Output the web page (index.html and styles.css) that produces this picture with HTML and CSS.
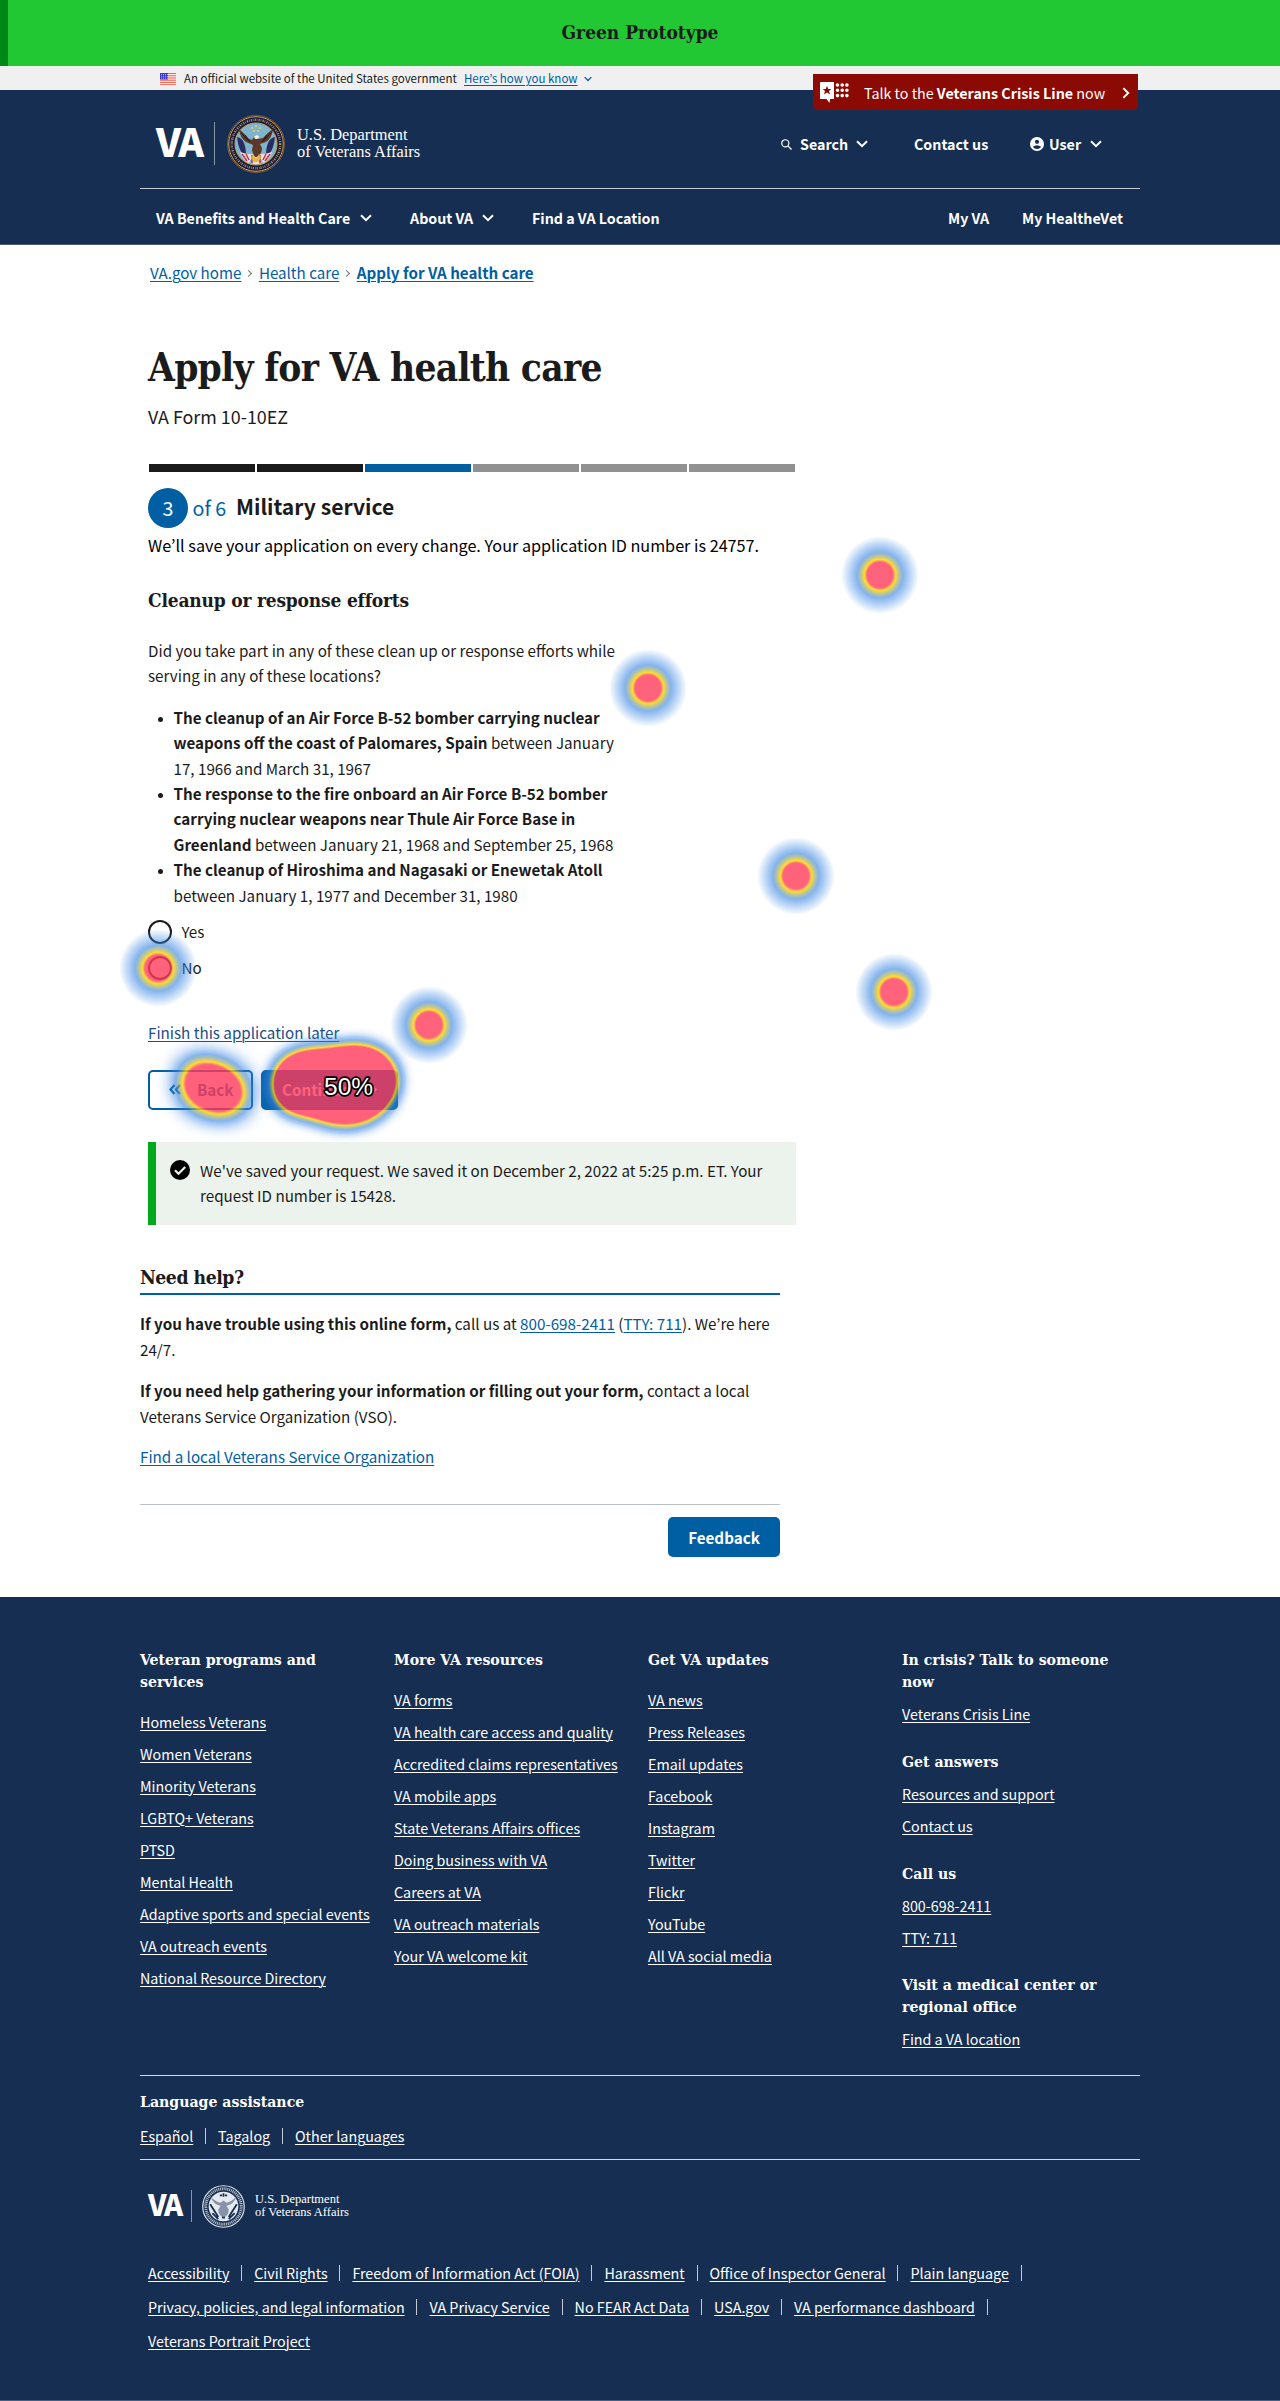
FILE: index.html
```html
<!DOCTYPE html>
<html lang="en">
<head>
<meta charset="utf-8">
<title>Apply for VA health care</title>
<link rel="stylesheet" href="styles.css">
</head>
<body>
<svg class="defs" width="0" height="0" aria-hidden="true">
  <symbol id="chev" viewBox="0 0 12 8"><path d="M1 1.2l5 5 5-5" fill="none" stroke="currentColor" stroke-width="2"/></symbol>
  <symbol id="double" viewBox="0 0 12 11"><path d="M5.500 1L1.500 5.500l4 4.500M11 1L7 5.500l4 4.500" fill="none" stroke="currentColor" stroke-width="2.200"/></symbol>
  <symbol id="seal" viewBox="0 0 58 58">
    <circle cx="29" cy="29" r="28.5" fill="#1d1b3d" stroke="#7d5a3c"/>
    <circle cx="29" cy="29" r="27.3" fill="none" stroke="#c7a34c" stroke-width="1"/>
    <circle cx="29" cy="29" r="24.200" fill="none" stroke="#a8976c" stroke-width="2.4" stroke-dasharray="1.1 1 .6 1.3"/>
    <circle cx="29" cy="29" r="21" fill="#7fb4cf" stroke="#c7a34c" stroke-width="1"/>
    <path d="M10 22q8 1 9 16l5 8q-12-5-14-24zM48 22q-8 1-9 16l-5 8q12-5 14-24z" fill="#2b2c63"/>
    <path d="M13 37q9 3 16 2 7 1 16-2-3 9-9 11l-3-5-1 6h-6l-1-6-3 5q-6-2-9-11z" fill="#e9dedd"/>
    <path d="M15 39l5 7m-1-7l3 6m3-5v8m8-8v8m6-9l-3 6m7-6l-5 7" stroke="#b83345" stroke-width="1.4"/>
    <path d="M12 14q1 9 7 13l7 3-1 5q1 5 3 7h2q5-3 5-9l-2-4 6-2q6-4 7-13-6 4-10 9l-5 1q-1-3-4-2l-2 3q-3-1-4-2-4-5-9-9z" fill="#5b3827"/>
    <path d="M14 18l8 8m-4-6l5 7m21-9l-8 8m4-6l-5 7" stroke="#2e1b17" stroke-width="1"/>
    <path d="M27 21.500l3-1.500 2.500 2-2.500 2h-2z" fill="#f4f0e6"/>
    <path d="M24 43l2-4 3 5 3-5 2 4-3 4h-4z" fill="#e2b43f"/>
    <g fill="#e9d65c"><circle cx="29" cy="11" r="1"/><circle cx="25" cy="13" r="1"/><circle cx="33" cy="13" r="1"/><circle cx="27" cy="16" r="1"/><circle cx="31" cy="16" r="1"/></g>
  </symbol>
  <symbol id="seal-mono" viewBox="0 0 58 58">
    <circle cx="29" cy="29" r="28" fill="none" stroke="#dfe3ea" stroke-width="1.600"/>
    <circle cx="29" cy="29" r="24" fill="none" stroke="#aeb8c6" stroke-width="4" stroke-dasharray="1.500 1"/>
    <circle cx="29" cy="29" r="20" fill="#e6eaf0"/>
    <path d="M12 16q3 11 13 12l-3 5q0 7 5 10h4q5-3 5-10l-3-5q10-1 13-12-6 7-13 8l-4-3-4 3q-7-1-13-8z" fill="#8793a8"/>
    <path d="M11 26l11 17m25-17L36 43M14 38l8 8m22-8l-8 8M29 11v5m-5-2h3m4 0h3M27 44h4" stroke="#162e51" stroke-width="2.500"/>
  </symbol>
</svg>

<div class="banner">Green Prototype</div>
<div class="gov">
  <svg class="flag" viewBox="0 0 16 12"><path fill="#fff" d="M0 0h16v12H0z"/><path d="M0 .5h16M0 2.300h16M0 4.100h16M0 5.900h16M0 7.700h16M0 9.500h16M0 11.400h16" stroke="#f4695a" stroke-width="1"/><path fill="#3838c8" d="M0 0h8v6.500H0z"/><path d="M1 1.500h7M1 3.300h7M1 5.100h7" stroke="#b9b9f5" stroke-dasharray="1 1"/></svg>
  <span class="gov-text">An official website of the United States government</span>
  <a class="gov-link">Here’s how you know</a>
  <svg class="gov-chev"><use href="#chev"/></svg>
</div>

<header class="header">
  <a class="crisis">
    <svg class="crisis-icon" viewBox="0 0 29 21"><path fill="#fff" d="M1 0h13v17h-4l-.5 4-3-4H0V1q0-1 1-1z"/><path fill="#8b0a03" d="M7 4l1.300 3h3L9 9l1 3.500-3-2-3 2L5 9 2.700 7h3z"/><g stroke="#fff" stroke-width="3.600" stroke-linecap="round" stroke-dasharray="0 4.700"><path d="M17.500 3h11M17.500 8.300h11M17.500 13.600h11"/></g></svg>
    <span class="crisis-text">Talk to the <b>Veterans Crisis Line</b> now</span>
    <svg class="crisis-arrow" viewBox="0 0 9 14"><path d="M1.500 1.500L7 7l-5.500 5.500" fill="none" stroke="#fff" stroke-width="2.200"/></svg>
  </a>
  <div class="wrap">
    <div class="brand-row">
      <div class="logo">
        <span class="logo-va">VA</span><i class="logo-bar"></i>
        <svg class="logo-seal"><use href="#seal"/></svg>
        <span class="logo-name">U.S. Department<br>of Veterans Affairs</span>
      </div>
      <div class="tools">
        <svg class="ic-search" viewBox="0 0 12 12"><circle cx="4.700" cy="4.700" r="3.900" fill="none" stroke="#fff" stroke-width="1.300"/><path d="M7.500 7.500l4 4" stroke="#fff" stroke-width="1.500"/></svg>
        <span class="t-search">Search</span><svg class="chev"><use href="#chev"/></svg>
        <span class="t-contact">Contact us</span>
        <svg class="ic-user" viewBox="0 0 14 14"><circle cx="7" cy="7" r="7" fill="#fff"/><circle cx="7" cy="4.800" r="2.100" fill="#162e51"/><path d="M2.800 9.700q4.200-3 8.400 0-1.600 2.300-4.200 2.300T2.800 9.700z" fill="#162e51"/></svg>
        <span class="t-user">User</span><svg class="chev"><use href="#chev"/></svg>
      </div>
    </div>
    <nav class="nav">
      <span>VA Benefits and Health Care</span><svg class="chev"><use href="#chev"/></svg>
      <span class="n-about">About VA</span><svg class="chev"><use href="#chev"/></svg>
      <span class="n-find">Find a VA Location</span>
      <span class="n-my">My VA</span><span class="n-mhv">My HealtheVet</span>
    </nav>
  </div>
</header>

<main class="wrap main">
  <div class="crumbs"><a>VA.gov home</a><i></i><a>Health care</a><i></i><a><b>Apply for VA health care</b></a></div>
  <div class="form">
    <h1>Apply for VA health care</h1>
    <p class="formno">VA Form 10-10EZ</p>
    <div class="progress"><i class="done"></i><i class="done"></i><i class="now"></i><i></i><i></i><i></i></div>
    <div class="step"><span class="num">3</span><span class="of">of 6</span><b>Military service</b></div>
    <p class="save">We’ll save your application on every change. Your application ID number is 24757.</p>
    <h3>Cleanup or response efforts</h3>
    <p class="question">Did you take part in any of these clean up or response efforts while<br>serving in any of these locations?</p>
    <ul class="events">
      <li><b>The cleanup of an Air Force B-52 bomber carrying nuclear<br>weapons off the coast of Palomares, Spain</b> between January<br>17, 1966 and March 31, 1967</li>
      <li><b>The response to the fire onboard an Air Force B-52 bomber<br>carrying nuclear weapons near Thule Air Force Base in<br>Greenland</b> between January 21, 1968 and September 25, 1968</li>
      <li><b>The cleanup of Hiroshima and Nagasaki or Enewetak Atoll</b><br>between January 1, 1977 and December 31, 1980</li>
    </ul>
    <div class="radios"><label><i></i>Yes</label><label><i></i>No</label></div>
    <p class="finish"><a>Finish this application later</a></p>
    <div class="buttons"><span class="btn back"><svg><use href="#double"/></svg>Back</span><span class="btn go">Continue<svg><use href="#double"/></svg></span></div>
    <div class="alert">
      <svg viewBox="0 0 20 20"><circle cx="10" cy="10" r="10"/><path d="M5 10.300l3.500 3.500L15.200 7" fill="none" stroke="#ecf3ec" stroke-width="2.200"/></svg>
      <p>We've saved your request. We saved it on December 2, 2022 at 5:25 p.m. ET. Your<br>request ID number is 15428.</p>
    </div>
  </div>
  <section class="help">
    <h2>Need help?</h2>
    <p><b>If you have trouble using this online form,</b> call us at <a>800-698-2411</a> (<a>TTY: 711</a>). We’re here<br>24/7.</p>
    <p><b>If you need help gathering your information or filling out your form,</b> contact a local<br>Veterans Service Organization (VSO).</p>
    <p class="vso"><a>Find a local Veterans Service Organization</a></p>
    <div class="feedback"><span>Feedback</span></div>
  </section>
</main>

<footer class="footer">
  <div class="wrap">
    <div class="cols">
      <div class="col">
        <h4>Veteran programs and<br>services</h4>
        <ul><li>Homeless Veterans</li><li>Women Veterans</li><li>Minority Veterans</li><li>LGBTQ+ Veterans</li><li>PTSD</li><li>Mental Health</li><li>Adaptive sports and special events</li><li>VA outreach events</li><li>National Resource Directory</li></ul>
      </div>
      <div class="col">
        <h4>More VA resources</h4>
        <ul><li>VA forms</li><li>VA health care access and quality</li><li>Accredited claims representatives</li><li>VA mobile apps</li><li>State Veterans Affairs offices</li><li>Doing business with VA</li><li>Careers at VA</li><li>VA outreach materials</li><li>Your VA welcome kit</li></ul>
      </div>
      <div class="col">
        <h4>Get VA updates</h4>
        <ul><li>VA news</li><li>Press Releases</li><li>Email updates</li><li>Facebook</li><li>Instagram</li><li>Twitter</li><li>Flickr</li><li>YouTube</li><li>All VA social media</li></ul>
      </div>
      <div class="col tight">
        <h4>In crisis? Talk to someone<br>now</h4>
        <ul><li>Veterans Crisis Line</li></ul>
        <h4>Get answers</h4>
        <ul><li>Resources and support</li><li>Contact us</li></ul>
        <h4>Call us</h4>
        <ul><li>800-698-2411</li><li>TTY: 711</li></ul>
        <h4>Visit a medical center or<br>regional office</h4>
        <ul><li>Find a VA location</li></ul>
      </div>
    </div>
    <div class="lang">
      <h4>Language assistance</h4>
      <div class="links"><a>Español</a><a>Tagalog</a><a>Other languages</a></div>
    </div>
    <div class="foot-logo">
      <span class="logo-va">VA</span><i class="logo-bar"></i>
      <svg class="logo-seal"><use href="#seal-mono"/></svg>
      <span class="logo-name">U.S. Department<br>of Veterans Affairs</span>
    </div>
    <div class="legal">
      <div class="links"><a>Accessibility</a><a>Civil Rights</a><a>Freedom of Information Act (FOIA)</a><a>Harassment</a><a>Office of Inspector General</a><a>Plain language</a><i></i></div>
      <div class="links"><a>Privacy, policies, and legal information</a><a>VA Privacy Service</a><a>No FEAR Act Data</a><a>USA.gov</a><a>VA performance dashboard</a><i></i></div>
      <div class="links"><a>Veterans Portrait Project</a></div>
    </div>
  </div>
</footer>

<svg class="heatmap" width="1280" height="1300" viewBox="0 0 1280 1300">
  <defs>
    <radialGradient id="spot">
      <stop offset=".33" stop-color="#ff3b5b" stop-opacity=".8"/>
      <stop offset=".4" stop-color="#ffd300" stop-opacity=".8"/>
      <stop offset=".59" stop-color="#3282e3" stop-opacity=".6"/>
      <stop offset=".8" stop-color="#3282e3" stop-opacity=".3"/>
      <stop offset="1" stop-color="#3282e3" stop-opacity="0"/>
    </radialGradient>
    <filter id="heat" x="-40%" y="-60%" width="180%" height="220%" color-interpolation-filters="sRGB">
      <feGaussianBlur stdDeviation="8"/>
      <feColorMatrix values="0 0 0 1 0  0 0 0 1 0  0 0 0 1 0  0 0 0 1 0"/>
      <feComponentTransfer>
        <feFuncR type="table" tableValues=".2 .2 .2 .6 1 1 1 1 1 1 1"/>
        <feFuncG type="table" tableValues=".51 .51 .51 .67 .83 .23 .23 .23 .23 .23 .23"/>
        <feFuncB type="table" tableValues=".89 .89 .89 .45 0 .36 .36 .36 .36 .36 .36"/>
        <feFuncA type="table" tableValues="0 .4 .6 .7 .8 .8 .8 .8 .8 .8 .8"/>
      </feComponentTransfer>
    </filter>
    <filter id="heat-soft" x="-80%" y="-100%" width="260%" height="300%" color-interpolation-filters="sRGB">
      <feGaussianBlur stdDeviation="12"/>
      <feColorMatrix values="0 0 0 1 0  0 0 0 1 0  0 0 0 1 0  0 0 0 1 0"/>
      <feComponentTransfer>
        <feFuncR type="table" tableValues=".2 .2 .2 .6 1 1 1 1 1 1 1"/>
        <feFuncG type="table" tableValues=".51 .51 .51 .67 .83 .23 .23 .23 .23 .23 .23"/>
        <feFuncB type="table" tableValues=".89 .89 .89 .45 0 .36 .36 .36 .36 .36 .36"/>
        <feFuncA type="table" tableValues="0 .34 .6 .7 .8 .8 .8 .8 .8 .8 .8"/>
      </feComponentTransfer>
    </filter>
  </defs>
  <g fill="url(#spot)">
    <circle cx="880" cy="575" r="39"/><circle cx="648" cy="688" r="39"/><circle cx="796" cy="876" r="39"/>
    <circle cx="894" cy="992" r="39"/><circle cx="158" cy="968" r="39"/><circle cx="429" cy="1025" r="39"/>
  </g>
  <g filter="url(#heat-soft)"><path d="M183 1082C183 1065 194 1061 207 1063C227 1065 244 1076 244 1093C244 1111 230 1115 215 1112C196 1109 183 1100 183 1082z"/></g>
  <g filter="url(#heat)"><path d="M274 1084C274 1062 292 1050 318 1050C332 1049 345 1046 356 1046C380 1046 396 1062 396 1080C396 1104 373 1124 345 1124C330 1124 317 1117 300 1114C283 1111 274 1100 274 1084z"/></g>
  <text class="pct" x="324" y="1095">50%</text>
</svg>
</body>
</html>
```
FILE: styles.css
```css
* { box-sizing: border-box; }
body { margin: 0; background: #fff; color: #1b1b1b; font: 15.190px/25.4px "Noto Sans CJK JP", "Noto Sans", sans-serif; position: relative; height: 2401px; overflow-x: hidden; }
p, h1, h2, h3, h4, ul { margin: 0; padding: 0; }
a { text-decoration: underline; text-underline-offset: 2px; text-decoration-thickness: 1px; color: #005ea2; }
i { font-style: normal; }
span, label, a, b, p, li, h1, h2, h3, h4 { white-space: nowrap; }
.defs { position: absolute; }
.banner, h1, h2, h3, h4 { font-family: "DejaVu Serif Condensed", "DejaVu Serif", serif; font-stretch: condensed; font-weight: 700; }
.wrap { width: 1000px; margin-left: 140px; }

.banner { height: 66px; background: #21c834; border-left: 8px solid #008817; display: flex; align-items: center; justify-content: center; padding-right: 8px; font-size: 19px; }
.gov { height: 24px; background: #f0f0f0; display: flex; align-items: center; padding-left: 160px; font-size: 11.500px; padding-top: 1px; }
.flag { width: 16px; height: 12px; margin-right: 8px; }
.gov-text { width: 280px; }
.gov-link { width: 120px; }
.gov-chev { width: 8px; height: 6px; color: #005ea2; }

.header { position: relative; height: 155px; background: #162e51; color: #fff; font-weight: 700; font-size: 14.25px; border-bottom: 1px solid #4a5d7c; }
.crisis { position: absolute; left: 813px; top: -16px; width: 325px; height: 36px; background: #8b0a03; border-radius: 0 0 5px 5px; display: flex; align-items: center; padding-left: 7px; color: #fff; text-decoration: none; font-weight: 400; font-size: 14.3px; padding-top: 1px; }
.crisis-icon { width: 29px; height: 21px; margin-right: 15px; }
.crisis-text { width: 258px; }
.crisis-arrow { width: 8px; height: 14px; }
.brand-row { height: 99px; border-bottom: 1px solid #c5cbd4; display: flex; padding-left: 16px; }
.logo, .foot-logo { display: flex; align-items: center; }
.logo { width: 625px; height: 107px; }
.logo-va { font-weight: 900; font-size: 39px; line-height: 40px; letter-spacing: -2px; width: 58px; padding-bottom: 7px; }
.logo-bar { width: 1px; height: 43px; background: #8a97a8; }
.logo-seal { width: 58px; height: 58px; margin: 0 12px; }
.logo-name { font: 400 16.400px/17px "Liberation Serif", serif; padding-bottom: 2px; }
.tools { display: flex; align-items: center; height: 108px; }
.ic-search { width: 11px; height: 11px; margin-right: 8px; }
.t-search { width: 56px; }
.t-contact { margin-left: 46px; width: 116px; }
.ic-user { width: 14px; height: 14px; margin-right: 5px; }
.t-user { width: 41px; }
.chev { width: 12px; height: 8px; }
.nav { display: flex; align-items: center; height: 57px; padding-left: 16px; }
.nav > span:first-child { width: 204px; }
.n-about { margin-left: 38px; width: 72px; }
.n-find { margin-left: 38px; width: 416px; }
.n-my { width: 74px; }

.main { height: 1352px; }
.main::before { content: ""; display: block; height: 15px; }
.crumbs { display: flex; align-items: center; height: 26px; padding-left: 10px; font-size: 15.150px; }
.crumbs i { width: 5px; height: 5px; border: solid #71767a; border-width: 1.500px 1.500px 0 0; transform: rotate(45deg); margin: 0 7.500px 0 5px; }
.form { padding-left: 8px; }
h1 { font-size: 38.500px; line-height: 48px; margin-top: 58px; letter-spacing: -.75px; }
.formno { font-size: 17.900px; line-height: 26px; margin-top: 11px; }
.progress { display: grid; grid-template-columns: repeat(6, 106px); gap: 2px; margin: 35px 0 0 1px; }
.progress i { height: 8px; background: #919191; }
.progress .done { background: #1b1b1b; }
.progress .now { background: #005ea2; }
.step { display: flex; align-items: center; height: 40px; margin-top: 16px; font-size: 19.700px; }
.step b { font-size: 21.100px; padding-bottom: 2px; }
.num { width: 40px; height: 40px; border-radius: 50%; background: #005ea2; color: #fff; text-align: center; line-height: 39px; }
.of { color: #005ea2; width: 48px; padding: 0 0 1px 4.500px; }
.save { font-size: 16.200px; line-height: 26px; margin-top: 4px; color: #000; }
h3 { font-size: 19px; line-height: 26px; margin-top: 29px; letter-spacing: -.2px; }
.question { margin-top: 25px; }
.events { list-style: none; margin-top: 16px; padding-left: 25.500px; }
.events li { position: relative; }
.events li::before { content: ""; position: absolute; left: -16px; top: 12px; width: 5px; height: 5px; border-radius: 50%; background: #1b1b1b; }
.radios { margin-top: 6px; }
.radios label { display: flex; align-items: center; height: 36px; }
.radios i { width: 24px; height: 24px; border: 2px solid #1b1b1b; border-radius: 50%; margin-right: 9.500px; }
.finish { margin-top: 33.500px; }
.finish a { color: #1d4c87; }
.buttons { display: flex; gap: 8px; margin-top: 25px; font-weight: 700; }
.btn { height: 40px; border: 2px solid #005ea2; border-radius: 5px; display: flex; align-items: center; color: #005ea2; }
.btn svg { width: 12px; height: 11px; }
.back { width: 105px; padding-left: 19px; }
.back svg { margin-right: 16px; }
.go { width: 137px; background: #005ea2; color: #fff; padding-left: 19px; }
.go svg { margin-left: 15px; transform: scaleX(-1); }
.alert { display: flex; width: 648px; height: 83px; margin-top: 32px; border-left: 8px solid #00a91c; background: #ecf3ec; padding: 16px 0 0 14px; }
.alert svg { width: 20px; height: 20px; margin: 2px 10px 0 0; }
.help { width: 640px; }
h2 { font-size: 19.200px; line-height: 26px; height: 29.500px; margin-top: 40.500px; border-bottom: 2px solid #005ea2; letter-spacing: -.45px; }
.help p { margin-top: 16.200px; }
.help .vso { margin-top: 15.500px; }
.feedback { margin-top: 34px; border-top: 1px solid #b9c3c5; padding-top: 12px; display: flex; justify-content: flex-end; }
.feedback span { width: 112px; height: 40px; background: #005ea2; color: #fff; border-radius: 5px; font-weight: 700; text-align: center; line-height: 40px; }

.footer { height: 804px; background: #162e51; color: #fff; font-size: 14.300px; padding-top: 52px; border-bottom: 1px solid #4a5d7c; }
.footer a { color: #fff; }
.cols { display: grid; grid-template-columns: repeat(4, 254px); height: 426px; }
h4 { font-size: 15.700px; line-height: 22px; }
.col ul { list-style: none; margin-top: 12.500px; }
.col li { line-height: 32px; text-decoration: underline; text-underline-offset: 2px; text-decoration-thickness: 1px; }
.col.tight ul { margin: 5px 0 20.800px; }
.lang { border: solid #d5dae2; border-width: 1px 0; height: 85px; padding-top: 15px; }
.links { display: flex; line-height: 26px; }
.lang .links { margin-top: 9.800px; }
.links a + a, .links i { margin-left: 24.800px; position: relative; }
.links a + a::before, .links i::before { content: ""; position: absolute; left: -13px; top: calc(50% - 8px); width: 1px; height: 16px; background: #c5cbd4; }
.foot-logo { margin: 24px 0 0 8px; height: 44px; }
.foot-logo .logo-va { font-size: 29px; width: 43px; }
.foot-logo .logo-bar { height: 32px; }
.foot-logo .logo-seal { width: 43px; height: 43px; margin: 0 10px; }
.foot-logo .logo-name { font-size: 12.500px; line-height: 12.700px; padding-bottom: 0; }
.legal { margin: 27.500px 0 0 8px; }
.legal .links { line-height: 34px; }

.heatmap { position: absolute; left: 0; top: 0; }
.pct { font: 400 24.500px "Liberation Sans", Arial, sans-serif; fill: #fff; stroke: #000; stroke-width: 3.500px; paint-order: stroke; stroke-linejoin: round; }
```
